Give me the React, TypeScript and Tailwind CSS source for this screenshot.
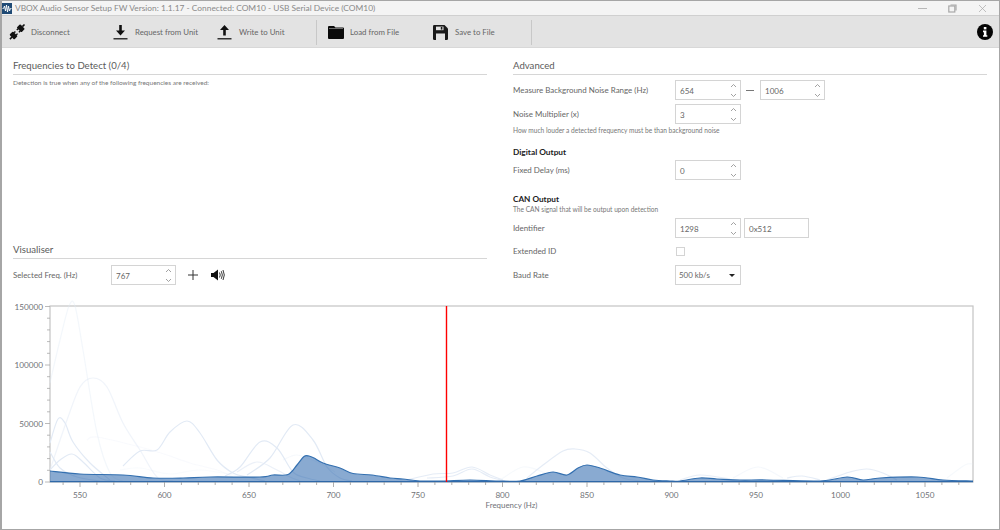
import React from "react";

type P = [number, number];

function smooth(pts: P[]): string {
  let d = `M${pts[0][0]} ${pts[0][1]}`;
  for (let i = 0; i < pts.length - 1; i++) {
    const p0 = pts[i - 1] || pts[i];
    const p1 = pts[i];
    const p2 = pts[i + 1];
    const p3 = pts[i + 2] || p2;
    const c1x = p1[0] + (p2[0] - p0[0]) / 6;
    const c1y = p1[1] + (p2[1] - p0[1]) / 6;
    const c2x = p2[0] - (p3[0] - p1[0]) / 6;
    const c2y = p2[1] - (p3[1] - p1[1]) / 6;
    d += ` C${c1x.toFixed(1)} ${c1y.toFixed(1)} ${c2x.toFixed(1)} ${c2y.toFixed(1)} ${p2[0]} ${p2[1]}`;
  }
  return d;
}

const dark: P[] = [
  [50, 471], [80, 474], [123, 475], [153, 478], [183, 478], [210, 477], [260, 477], [273, 475], [288, 474.5], [297, 465], [304, 456.5], [309, 456], [314, 458], [323, 463], [340, 468], [353, 473.5], [372, 475], [390, 478], [403, 479], [420, 481], [443, 481], [470, 480], [497, 481], [520, 481], [537, 476], [553, 472], [567, 475], [578, 468], [587, 465], [600, 468], [620, 475], [637, 477], [653, 480], [670, 481], [680, 481], [700, 478], [717, 479], [740, 480], [767, 480], [820, 481], [847, 477], [863, 480], [880, 478], [917, 477], [943, 480], [973, 481],
];

const light: { pts: P[]; o: number }[] = [
  { pts: [[50, 383], [60, 340], [69, 306], [75, 306], [83, 350], [97, 433], [110, 473], [123, 481]], o: 0.4 },
  { pts: [[50, 470], [67, 420], [80, 387], [93, 378], [107, 387], [123, 423], [140, 450], [157, 477], [173, 481]], o: 0.5 },
  { pts: [[50, 443], [58, 419], [65, 423], [73, 442], [90, 463], [110, 480]], o: 1 },
  { pts: [[50, 470], [60, 460], [72, 454], [83, 462], [100, 478], [115, 481]], o: 1 },
  { pts: [[50, 452], [60, 468], [77, 477], [100, 481]], o: 1 },
  { pts: [[123, 466], [140, 451], [157, 450], [170, 432], [187, 421], [200, 433], [217, 460], [233, 473], [247, 477], [265, 481]], o: 1 },
  { pts: [[225, 476], [240, 467], [260, 442], [277, 448], [293, 472], [307, 478], [320, 481]], o: 1 },
  { pts: [[247, 475], [270, 458], [293, 425], [313, 440], [327, 467], [340, 478], [352, 481]], o: 1 },
  { pts: [[237, 472], [257, 462], [277, 470], [290, 477], [300, 481]], o: 0.7 },
  { pts: [[87, 440], [97, 437], [140, 447], [167, 455], [190, 463], [217, 470], [235, 478]], o: 0.22 },
  { pts: [[120, 470], [140, 468], [170, 474], [200, 470], [240, 476]], o: 0.2 },
  { pts: [[283, 460], [297, 455], [317, 462], [335, 472]], o: 0.35 },
  { pts: [[407, 480], [433, 474], [453, 473], [472, 467], [490, 475], [503, 480]], o: 0.9 },
  { pts: [[427, 478], [453, 476], [472, 469], [490, 477], [505, 481]], o: 0.9 },
  { pts: [[500, 480], [523, 467], [543, 472], [552, 476]], o: 0.3 },
  { pts: [[527, 478], [543, 465], [563, 451], [575, 449], [590, 453], [607, 468], [623, 478], [640, 481]], o: 0.9 },
  { pts: [[733, 478], [758, 467], [783, 478]], o: 0.35 },
  { pts: [[787, 478], [802, 476], [820, 480]], o: 0.9 },
  { pts: [[827, 480], [850, 472], [867, 469], [883, 473], [897, 480]], o: 0.9 },
  { pts: [[947, 478], [965, 465], [973, 464]], o: 0.3 },
  { pts: [[680, 480], [700, 475], [730, 479]], o: 0.8 },
];

const xMajor = [550, 600, 650, 700, 750, 800, 850, 900, 950, 1000, 1050];
const xPos = (hz: number) => 80 + (hz - 550) * 1.69;
const xMinor: number[] = [];
for (let hz = 540; hz <= 1070; hz += 10) xMinor.push(hz);
const yMinor: number[] = [];
for (let v = 0; v <= 150000; v += 10000) yMinor.push(v);
const yPos = (v: number) => 482 - (v / 150000) * 175.5;
const chartFont = "Lato, sans-serif";

function Chart() {
  return (
    <svg viewBox="0 300 1000 215" className="block w-full h-[215px]">
      <rect x="50" y="306" width="923" height="176" fill="#ffffff" stroke="#c4c4c4" strokeWidth="1.2" />
      {light.map((s, i) => (
        <path key={i} d={smooth(s.pts)} fill="none" stroke="#e2eaf5" strokeWidth="1.2" opacity={s.o} />
      ))}
      <path d={smooth(dark) + " L973 482 L50 482 Z"} fill="#2f6aae" fillOpacity="0.57" stroke="none" />
      <path d={smooth(dark)} fill="none" stroke="#3470b0" strokeWidth="1.2" />
      <line x1="50" y1="481.7" x2="973" y2="481.7" stroke="#2f68a8" strokeWidth="1.3" />
      <line x1="446.5" y1="306" x2="446.5" y2="482" stroke="#ff0000" strokeWidth="1.4" />
      {yMinor.map((v) => (
        <line key={v} x1={v % 50000 === 0 ? 45 : 47} x2="50" y1={yPos(v)} y2={yPos(v)} stroke="#a8a8a8" strokeWidth="0.8" />
      ))}
      {xMinor.map((hz) => (
        <line key={hz} x1={xPos(hz)} x2={xPos(hz)} y1="482" y2={hz % 50 === 0 ? 487 : 485} stroke="#9a9a9a" strokeWidth="0.8" />
      ))}
      {[[0, "0"], [50000, "50000"], [100000, "100000"], [150000, "150000"]].map(([v, t]) => (
        <text key={t as string} x="43" y={yPos(v as number) + 3} textAnchor="end" fontSize="8.2" fill="#6f7277" fontFamily={chartFont}>{t as string}</text>
      ))}
      {xMajor.map((hz) => (
        <text key={hz} x={xPos(hz)} y="498" textAnchor="middle" fontSize="8.2" fill="#6f7277" fontFamily={chartFont}>{hz}</text>
      ))}
      <text x="511.5" y="508" textAnchor="middle" fontSize="7.9" fill="#6f7277" fontFamily={chartFont}>Frequency (Hz)</text>
    </svg>
  );
}

function Spin({ value, w = "w-[66px]" }: { value: string; w?: string }) {
  return (
    <div className={`${w} h-[20px] border border-[#d4d4d4] flex items-center justify-between pl-[4px] pr-[3px] text-[8px] text-[#666] bg-white`}>
      <span className="pt-[1px]">{value}</span>
      <svg width="7" height="15" viewBox="0 0 7 15" fill="none" stroke="#8a8a8a" strokeWidth="0.8">
        <path d="M1 4 L3.5 1.5 L6 4" />
        <path d="M1 11 L3.5 13.5 L6 11" />
      </svg>
    </div>
  );
}

function Heading({ children }: { children: React.ReactNode }) {
  return <div className="h-[16px] border-b border-[#d6d6d6] text-[9.6px] leading-[14px] text-[#5b5b5b]">{children}</div>;
}

function Row({ label, children, h = "h-[20px]" }: { label: string; children: React.ReactNode; h?: string }) {
  return (
    <div className={`flex items-center ${h}`}>
      <div className="w-[162px] pt-[1px] text-[7.95px] text-[#666]">{label}</div>
      {children}
    </div>
  );
}

function Tool({ icon, label, w }: { icon: React.ReactNode; label: string; w: string }) {
  return (
    <div className={`flex items-center ${w}`}>
      <div className="w-[22px] flex justify-start">{icon}</div>
      <span className="pt-[1px] text-[7.85px] text-[#666]">{label}</span>
    </div>
  );
}

const Plug = (
  <svg width="16" height="16" viewBox="0 0 16 16" fill="#111" overflow="visible">
    <g transform="rotate(45 8 8)">
      <rect x="4.6" y="0.2" width="6.8" height="5" rx="1" />
      <rect x="7.2" y="-2.6" width="1.6" height="3" />
      <rect x="5.8" y="5" width="1.4" height="1.8" />
      <rect x="8.8" y="5" width="1.4" height="1.8" />
      <rect x="4.6" y="10.4" width="6.8" height="5" rx="1" />
      <rect x="7.2" y="15" width="1.6" height="3" />
      <rect x="5.8" y="8.8" width="1.4" height="1.8" />
      <rect x="8.8" y="8.8" width="1.4" height="1.8" />
    </g>
  </svg>
);

const Down = (
  <svg width="15" height="16" viewBox="0 0 15 16" fill="#111">
    <path d="M6.2 1 H8.8 V6.5 H12 L7.5 11.5 L3 6.5 H6.2 Z" />
    <rect x="0.5" y="14" width="14" height="1.5" fill="#333" />
  </svg>
);

const Up = (
  <svg width="15" height="16" viewBox="0 0 15 16" fill="#111">
    <path d="M6.2 11.5 H8.8 V6 H12 L7.5 1 L3 6 H6.2 Z" />
    <rect x="0.5" y="14" width="14" height="1.5" fill="#333" />
  </svg>
);

const Folder = (
  <svg width="16" height="13" viewBox="0 0 16 13" fill="#0a0a0a">
    <path d="M0 1 Q0 0 1 0 H6 L7.5 1.5 H15 Q16 1.5 16 2.5 V12 Q16 13 15 13 H1 Q0 13 0 12 Z" />
    <rect x="1" y="2.3" width="14" height="0.7" fill="#9a9a9a" />
  </svg>
);

const Save = (
  <svg width="15" height="15" viewBox="0 0 15 15">
    <path d="M0 1.2 Q0 0 1.2 0 H11.5 L15 3.5 V13.8 Q15 15 13.8 15 H1.2 Q0 15 0 13.8 Z" fill="#1a1a1a" />
    <rect x="3" y="1.6" width="7.5" height="3.6" fill="#e3e3e3" />
    <rect x="3" y="8.5" width="9" height="6.5" fill="#e3e3e3" />
    <rect x="7.8" y="2" width="1.6" height="2.6" fill="#1a1a1a" />
  </svg>
);

const Info = (
  <svg width="16" height="16" viewBox="0 0 16 16">
    <circle cx="8" cy="8" r="8" fill="#050505" />
    <rect x="6.8" y="3" width="2.6" height="2.4" fill="#fff" />
    <path d="M6 6.6 H9.4 V11.2 H10.3 V12.8 H6 V11.2 H6.9 V8.2 H6 Z" fill="#fff" />
  </svg>
);

export default function App() {
  return (
    <div className="w-[1000px] h-[530px] overflow-hidden bg-white border-l-2 border-r border-y border-[#a6a6a6] flex flex-col font-['Lato','Open_Sans',sans-serif] box-border">
      <div className="h-[15px] bg-[#f4f4f4] flex items-center shrink-0 border-b border-[#d0d0d0]">
        <svg width="10" height="11" viewBox="0 0 10 11">
          <rect width="10" height="11" fill="#1f4a75" />
          <path d="M0.5 5.5 H1.5 L2.5 3 L3.5 8 L4.5 2 L5.5 9 L6.5 3 L7.5 8 L8.5 5.5 H9.5" fill="none" stroke="#fff" strokeWidth="0.9" />
        </svg>
        <span className="ml-[3px] text-[8.4px] text-[#8a8a8a] whitespace-nowrap">VBOX Audio Sensor Setup FW Version: 1.1.17 - Connected: COM10 - USB Serial Device (COM10)</span>
        <div className="ml-auto flex items-center gap-[21px] mr-[12px] text-[#a8a8a8]">
          <svg width="9" height="9" viewBox="0 0 9 9" stroke="currentColor" fill="none"><path d="M0 4.5 H9" strokeWidth="0.8" /></svg>
          <svg width="9" height="9" viewBox="0 0 9 9" stroke="currentColor" fill="none" strokeWidth="1.2"><rect x="0.8" y="2" width="6" height="6" /><path d="M2.5 1 H8 V6.5" /></svg>
          <svg width="9" height="9" viewBox="0 0 9 9" stroke="currentColor" fill="none" strokeWidth="0.7"><path d="M1 1 L8 8 M8 1 L1 8" /></svg>
        </div>
      </div>

      <div className="h-[32px] bg-[#e3e3e3] border-b border-[#d8d8d8] shrink-0 flex items-center pl-[7px] pr-[6px] pt-[1px]">
        <Tool icon={Plug} label="Disconnect" w="w-[104px]" />
        <Tool icon={Down} label="Request from Unit" w="w-[104px]" />
        <Tool icon={Up} label="Write to Unit" w="w-[99px]" />
        <div className="w-px h-[25px] bg-[#c8c8c8] mr-[11px]" />
        <Tool icon={Folder} label="Load from File" w="w-[105px]" />
        <Tool icon={Save} label="Save to File" w="w-[98px]" />
        <div className="w-px h-[25px] bg-[#c8c8c8]" />
        <div className="ml-auto">{Info}</div>
      </div>

      <div className="h-[252px] shrink-0 grid grid-cols-[474px_474px] gap-x-[26px] pl-[11px]">
        <div className="flex flex-col pt-[11px]">
          <Heading>Frequencies to Detect (0/4)</Heading>
          <div className="text-[6.5px] leading-[10px] mt-[3px] text-[#777]">Detection is true when any of the following frequencies are received:</div>
          <div className="mt-[155px]">
            <Heading>Visualiser</Heading>
          </div>
          <div className="flex items-center mt-[6px] h-[20px]">
            <div className="w-[98px] pt-[1px] text-[7.85px] text-[#666]">Selected Freq. (Hz)</div>
            <Spin value="767" w="w-[65px]" />
            <svg width="10" height="10" viewBox="0 0 10 10" className="ml-[12px]" stroke="#333" strokeWidth="1"><path d="M5 0 V10 M0 5 H10" /></svg>
            <svg width="14" height="12" viewBox="0 0 14 12" className="ml-[13px]">
              <path d="M0 4 H2.5 L7 0.5 V11.5 L2.5 8 H0 Z" fill="#111" />
              <path d="M8.5 3.5 Q10 6 8.5 8.5 M10.3 2.2 Q12.4 6 10.3 9.8 M12 1 Q14.6 6 12 11" fill="none" stroke="#222" strokeWidth="0.9" />
            </svg>
          </div>
        </div>

        <div className="flex flex-col pt-[11px]">
          <Heading>Advanced</Heading>
          <div className="mt-[5px] flex flex-col gap-[4px]">
            <Row label="Measure Background Noise Range (Hz)">
              <Spin value="654" />
              <div className="w-[8px] h-px bg-[#777] ml-[5px] mr-[6px]" />
              <Spin value="1006" w="w-[65px]" />
            </Row>
            <Row label="Noise Multiplier (x)">
              <Spin value="3" />
            </Row>
          </div>
          <div className="text-[6.6px] leading-[10px] mt-[1px] text-[#777]">How much louder a detected frequency must be than background noise</div>
          <div className="text-[8.3px] leading-[12px] font-bold text-[#222] mt-[11px]">Digital Output</div>
          <div className="mt-[2px]">
            <Row label="Fixed Delay (ms)"><Spin value="0" /></Row>
          </div>
          <div className="text-[8.2px] leading-[12px] font-bold text-[#222] mt-[13px]">CAN Output</div>
          <div className="text-[6.6px] leading-[8px] text-[#777]">The CAN signal that will be output upon detection</div>
          <div className="mt-[5px] flex flex-col gap-[3.5px]">
            <Row label="Identifier">
              <Spin value="1298" />
              <div className="ml-[3px] w-[65px] h-[20px] border border-[#d4d4d4] flex items-center pl-[4px] pt-[1px] text-[8px] text-[#666]">0x512</div>
            </Row>
            <Row label="Extended ID">
              <div className="w-[9px] h-[9px] border border-[#d4d4d4] ml-[1px]" />
            </Row>
            <Row label="Baud Rate">
              <div className="w-[66px] h-[20px] border border-[#d4d4d4] flex items-center justify-between pl-[3px] pr-[5px] pt-[1px] text-[7.9px] text-[#666]">
                <span>500 kb/s</span>
                <svg width="6" height="3" viewBox="0 0 6 3"><path d="M0 0 H6 L3 3 Z" fill="#222" /></svg>
              </div>
            </Row>
          </div>
        </div>
      </div>

      <div className="-ml-[2px] w-[1000px] shrink-0">
        <Chart />
      </div>
    </div>
  );
}
